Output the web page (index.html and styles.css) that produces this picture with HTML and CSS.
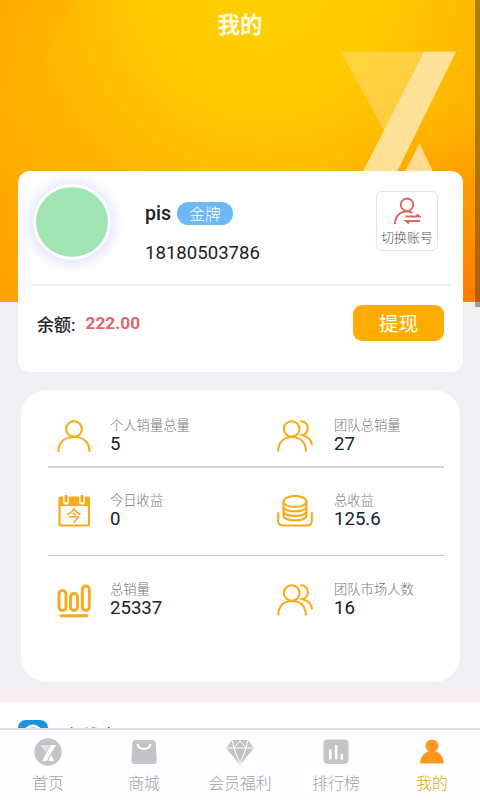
FILE: index.html
```html
<!DOCTYPE html>
<html lang="zh-CN">
<head>
<meta charset="utf-8">
<meta name="viewport" content="width=device-width, initial-scale=1">
<title>我的</title>
<link rel="stylesheet" href="styles.css">
</head>
<body>
<svg width="0" height="0" class="defs" aria-hidden="true">
  <symbol id="team" viewBox="0 0 36 32">
    <circle cx="14.700" cy="9" r="7.800"/><path d="M1.200 30.500C1.600 22 7 17 15 17s13.500 5 14 13.500M24 1.300c4 0 6.800 3 6.800 6.700s-2.500 6.300-5.500 7c5 1.500 9 4.500 9.600 9.500"/>
  </symbol>
</svg>
<div class="screen">
  <main class="content">
    <svg class="hero-art" viewBox="0 0 480 303" preserveAspectRatio="none" aria-hidden="true">
      <defs>
        <radialGradient id="glow" gradientUnits="userSpaceOnUse" cx="0" cy="0" r="1" gradientTransform="translate(265 -20) rotate(18) scale(420 430)">
          <stop offset="0" stop-color="#ffd000"/><stop offset=".3" stop-color="#ffc900"/><stop offset=".5" stop-color="#ffb900"/><stop offset=".72" stop-color="#ffab00"/><stop offset="1" stop-color="#ffa000"/>
        </radialGradient>
        <radialGradient id="corner" gradientUnits="userSpaceOnUse" cx="490" cy="310" r="210"><stop stop-color="#ff7600"/><stop offset="1" stop-color="#ff8c00" stop-opacity="0"/></radialGradient>
        <linearGradient id="sheen" gradientUnits="userSpaceOnUse" x1="0" y1="20" x2="90" y2="65"><stop stop-color="#ffa600" stop-opacity=".7"/><stop offset="1" stop-color="#ffb500" stop-opacity="0"/></linearGradient>
      </defs>
      <rect width="480" height="303" fill="url(#glow)"/>
      <rect width="480" height="303" fill="url(#corner)"/>
      <path d="M0 0H77Q45 58 0 150Z" fill="url(#sheen)"/>
      <path d="M341 52H456L398 171L384 131Z" fill="#ffe493" fill-opacity=".43"/>
      <path d="M424 52H456L397 172H363Z" fill="#ffe3a1" fill-opacity=".9"/>
      <path d="M419.500 144L433 172H405Z" fill="#ffda8f"/>
    </svg>
    <h1 class="title">我的</h1>
    <section class="profile">
      <div class="identity">
        <div class="avatar"></div>
        <div class="who">
          <div class="name">pis<span class="level">金牌</span></div>
          <div class="phone">18180503786</div>
        </div>
        <div class="switch">
          <svg width="28" height="29" viewBox="0 0 28 29" fill="none" stroke="#e16466" stroke-width="1.900"><circle cx="14" cy="7.700" r="6.200"/><path d="M2 27C2 19 7 14.500 14 14.500c2 0 4 .5 5.500 1.500M12.500 19.500h14l-3-2M27 24H13l3 2.500"/></svg>
          <span>切换账号</span>
        </div>
      </div>
      <div class="balance"><span>余额:</span><b>222.00</b><div class="withdraw">提现</div></div>
    </section>
    <section class="stats">
      <div class="row">
        <div class="stat"><svg class="icon" viewBox="0 0 36 32"><circle cx="18" cy="9" r="7.900"/><path d="M2.500 31C3 22 9 17 18 17s15 5 15.500 14"/></svg><div><p>个人销量总量</p><strong>5</strong></div></div>
        <div class="stat"><svg class="icon"><use href="#team"/></svg><div><p>团队总销量</p><strong>27</strong></div></div>
      </div>
      <div class="row second">
        <div class="stat"><svg class="icon" viewBox="0 0 36 32"><rect x="3.500" y="2.500" width="29.500" height="28" rx="1"/><path d="M3 2h30v9H3z" fill="#f8ab18" stroke="none"/><path d="M10 0v7M26 0v7" stroke="#fff" stroke-width="5.500"/><path d="M10 1v5M26 1v5" stroke-width="3"/><text x="18" y="26" class="today">今</text></svg><div><p>今日收益</p><strong>0</strong></div></div>
        <div class="stat"><svg class="icon" viewBox="0 0 36 32"><ellipse cx="18" cy="6.500" rx="11.500" ry="5.500"/><path d="M6.500 6.500v14c0 6.500 23 6.500 23 0v-14M6.500 11.500c0 6.500 23 6.500 23 0M6.500 16c0 6.500 23 6.500 23 0M1.200 18v8q0 4.500 5 4.500h23.600q5 0 5-4.500v-8"/></svg><div><p>总收益</p><strong>125.6</strong></div></div>
      </div>
      <div class="row third">
        <div class="stat"><svg class="icon bars" viewBox="0 0 36 34"><rect x="3" y="6.500" width="7" height="20" rx="3.500"/><rect x="14.500" y="9.500" width="7" height="17" rx="3.500"/><rect x="26.300" y="2" width="7" height="24.500" rx="3.500"/><path d="M5 31.800h26" stroke-width="3"/></svg><div><p>总销量</p><strong>25337</strong></div></div>
        <div class="stat"><svg class="icon"><use href="#team"/></svg><div><p>团队市场人数</p><strong>16</strong></div></div>
      </div>
    </section>
    <section class="service">
      <svg width="30" height="30" viewBox="0 0 30 30"><rect width="30" height="30" rx="8" fill="#1696db"/><circle cx="15" cy="14" r="8" fill="none" stroke="#fff" stroke-width="3"/></svg>
      <span>在线客服</span>
    </section>
    <i class="scrollbar"></i>
  </main>
  <nav class="tabs">
    <div class="tab"><svg viewBox="0 0 28 28"><circle cx="14" cy="14" r="13.700"/><path d="M6 7h10l-4 8Z" fill="#e3e1e3"/><path d="M17 7H22L12.500 23H8ZM17 17l3.500 6h-6Z" fill="#fff"/></svg><span>首页</span></div>
    <div class="tab"><svg viewBox="0 0 28 28"><path d="M5 2h18q2.500 0 2.700 2.500l1 18q.1 3.500-3 3.500H4.500q-3.200 0-3-3.500l1-18Q2.700 2 5 2Z"/><path d="M7.500 6c1 6.500 12 6.500 13 0" fill="none" stroke="#fff" stroke-width="2"/></svg><span>商城</span></div>
    <div class="tab"><svg viewBox="0 0 28 28"><path d="M6 2h16l6 8-14 17L0 10Z"/><path d="M1 10h26M6 2l2 8 6 16 6-16 2-8M8 10l6-7 6 7" fill="none" stroke="#fff" stroke-width="1"/></svg><span>会员福利</span></div>
    <div class="tab"><svg viewBox="0 0 28 28"><rect x="1.500" y="1.500" width="25" height="24.500" rx="4"/><path d="M8.300 11.500v10M14.200 7v14.500M19.700 16v5.500" stroke="#fff" stroke-width="2.600"/></svg><span>排行榜</span></div>
    <div class="tab active"><svg viewBox="0 0 28 28"><circle cx="14" cy="8" r="6.500"/><path d="M2 25.500c0-7 4.500-10 8-12h8c4 2 7.800 5 7.800 12Z"/></svg><span>我的</span></div>
  </nav>
</div>
</body>
</html>
```
FILE: styles.css
```css
* { box-sizing: border-box; }
body { margin: 0; font-family: Roboto, "Noto Sans CJK SC", sans-serif; color: #222; }
h1, p { margin: 0; }
.defs { position: absolute; }
.screen { width: 480px; height: 800px; display: flex; flex-direction: column; overflow: hidden; }
.content { position: relative; height: 728px; flex: none; overflow: hidden; background: #f0eff3; }
.hero-art { position: absolute; top: 0; left: 0; width: 480px; height: 302px; }
.title { position: relative; height: 171px; padding-top: 9px; text-align: center; font-size: 22.400px; line-height: 32px; font-weight: 700; color: #fffbe5; }
.profile { position: relative; width: 445px; height: 201px; margin-left: 18px; padding: 0 12px; background: #fefeff; border-radius: 12px; }
.identity { height: 115px; display: flex; border-bottom: 2px solid #f0eff4; }
.avatar { width: 78px; height: 76px; margin: 13px 0 0 3px; border: 3px solid #fff; border-radius: 50%; background: #a2e5b5; box-shadow: 0 1px 13px 2px #d8e0fb; }
.who { margin-left: 34px; padding-top: 28px; }
.name { display: flex; align-items: center; height: 28px; font-size: 19.500px; font-weight: 500; }
.level { width: 56px; height: 23px; margin-left: 6px; border-radius: 12px; background: #6cb8f8; color: #fff; font-size: 15.700px; line-height: 25px; font-weight: 300; text-align: center; }
.phone { margin-top: 14px; font-size: 18.600px; line-height: 25px; }
.switch { width: 62px; height: 60px; margin: 20px 13px 0 auto; border: 1px solid #f6dde5; border-radius: 6px; display: flex; flex-direction: column; align-items: center; padding-top: 5px; font-size: 12.900px; line-height: 20px; font-weight: 300; color: #555; white-space: nowrap; }
.switch span { margin-top: 2px; }
.balance { height: 74px; display: flex; align-items: center; padding: 0 7px; font-size: 17px; font-weight: 500; }
.balance b { margin-left: 10px; color: #e26668; font-size: 17.300px; font-weight: 700; }
.withdraw { width: 91px; height: 36px; margin-left: auto; border-radius: 9px; background: #ffac00; color: #fff; font-size: 19.700px; line-height: 39px; font-weight: 400; text-align: center; }
.stats { width: 439px; height: 292px; margin: 18px 0 0 21px; padding: 0 16px 0 27px; background: #fefeff; border-radius: 26px; }
.row { height: 78px; padding-top: 26px; display: grid; grid-template-columns: 221px 1fr; border-bottom: 2px solid #d6d4d9; }
.second { height: 88px; padding-top: 23px; border-bottom: 1px solid #c6c4c9; }
.third { border: 0; padding-top: 24px; }
.stat { display: flex; padding-left: 8px; }
.icon { width: 36px; height: 32px; margin: 4px 18px 0 0; flex: none; fill: none; stroke: #f8ab18; stroke-width: 2.100; stroke-linecap: round; }
.bars { height: 34px; stroke-width: 2.900; }
.today { fill: #f5ac22; stroke: none; font-size: 15px; font-weight: 500; text-anchor: middle; }
.stat + .stat .icon { margin-right: 21px; }
.stat p { font-size: 13.300px; line-height: 20px; font-weight: 300; color: #777; }
.stat strong { display: block; font-size: 18.600px; line-height: 17px; font-weight: 400; color: #102429; }
.service { display: flex; gap: 16px; margin-top: 8px; padding: 18px 18px 0; height: 60px; background: #fff; border-top: 12px solid #f9efef; box-sizing: content-box; }
.service span { font-size: 18px; line-height: 34px; }
.scrollbar { position: absolute; right: 0; top: 0; width: 5px; height: 307px; background: rgba(85, 65, 20, .47); }
.tabs { height: 72px; display: grid; grid-template-columns: repeat(5, 1fr); background: #fefdff; border-top: 2px solid #dfdfe1; }
.tab { display: flex; flex-direction: column; align-items: center; padding-top: 8px; color: #a3a1a6; font-size: 15.800px; line-height: 24px; font-weight: 300; }
.tab svg { width: 28px; height: 28px; fill: #c5c3c6; margin-bottom: 6px; }
.active { color: #e2a700; }
.active svg { fill: #ff9620; }
```
